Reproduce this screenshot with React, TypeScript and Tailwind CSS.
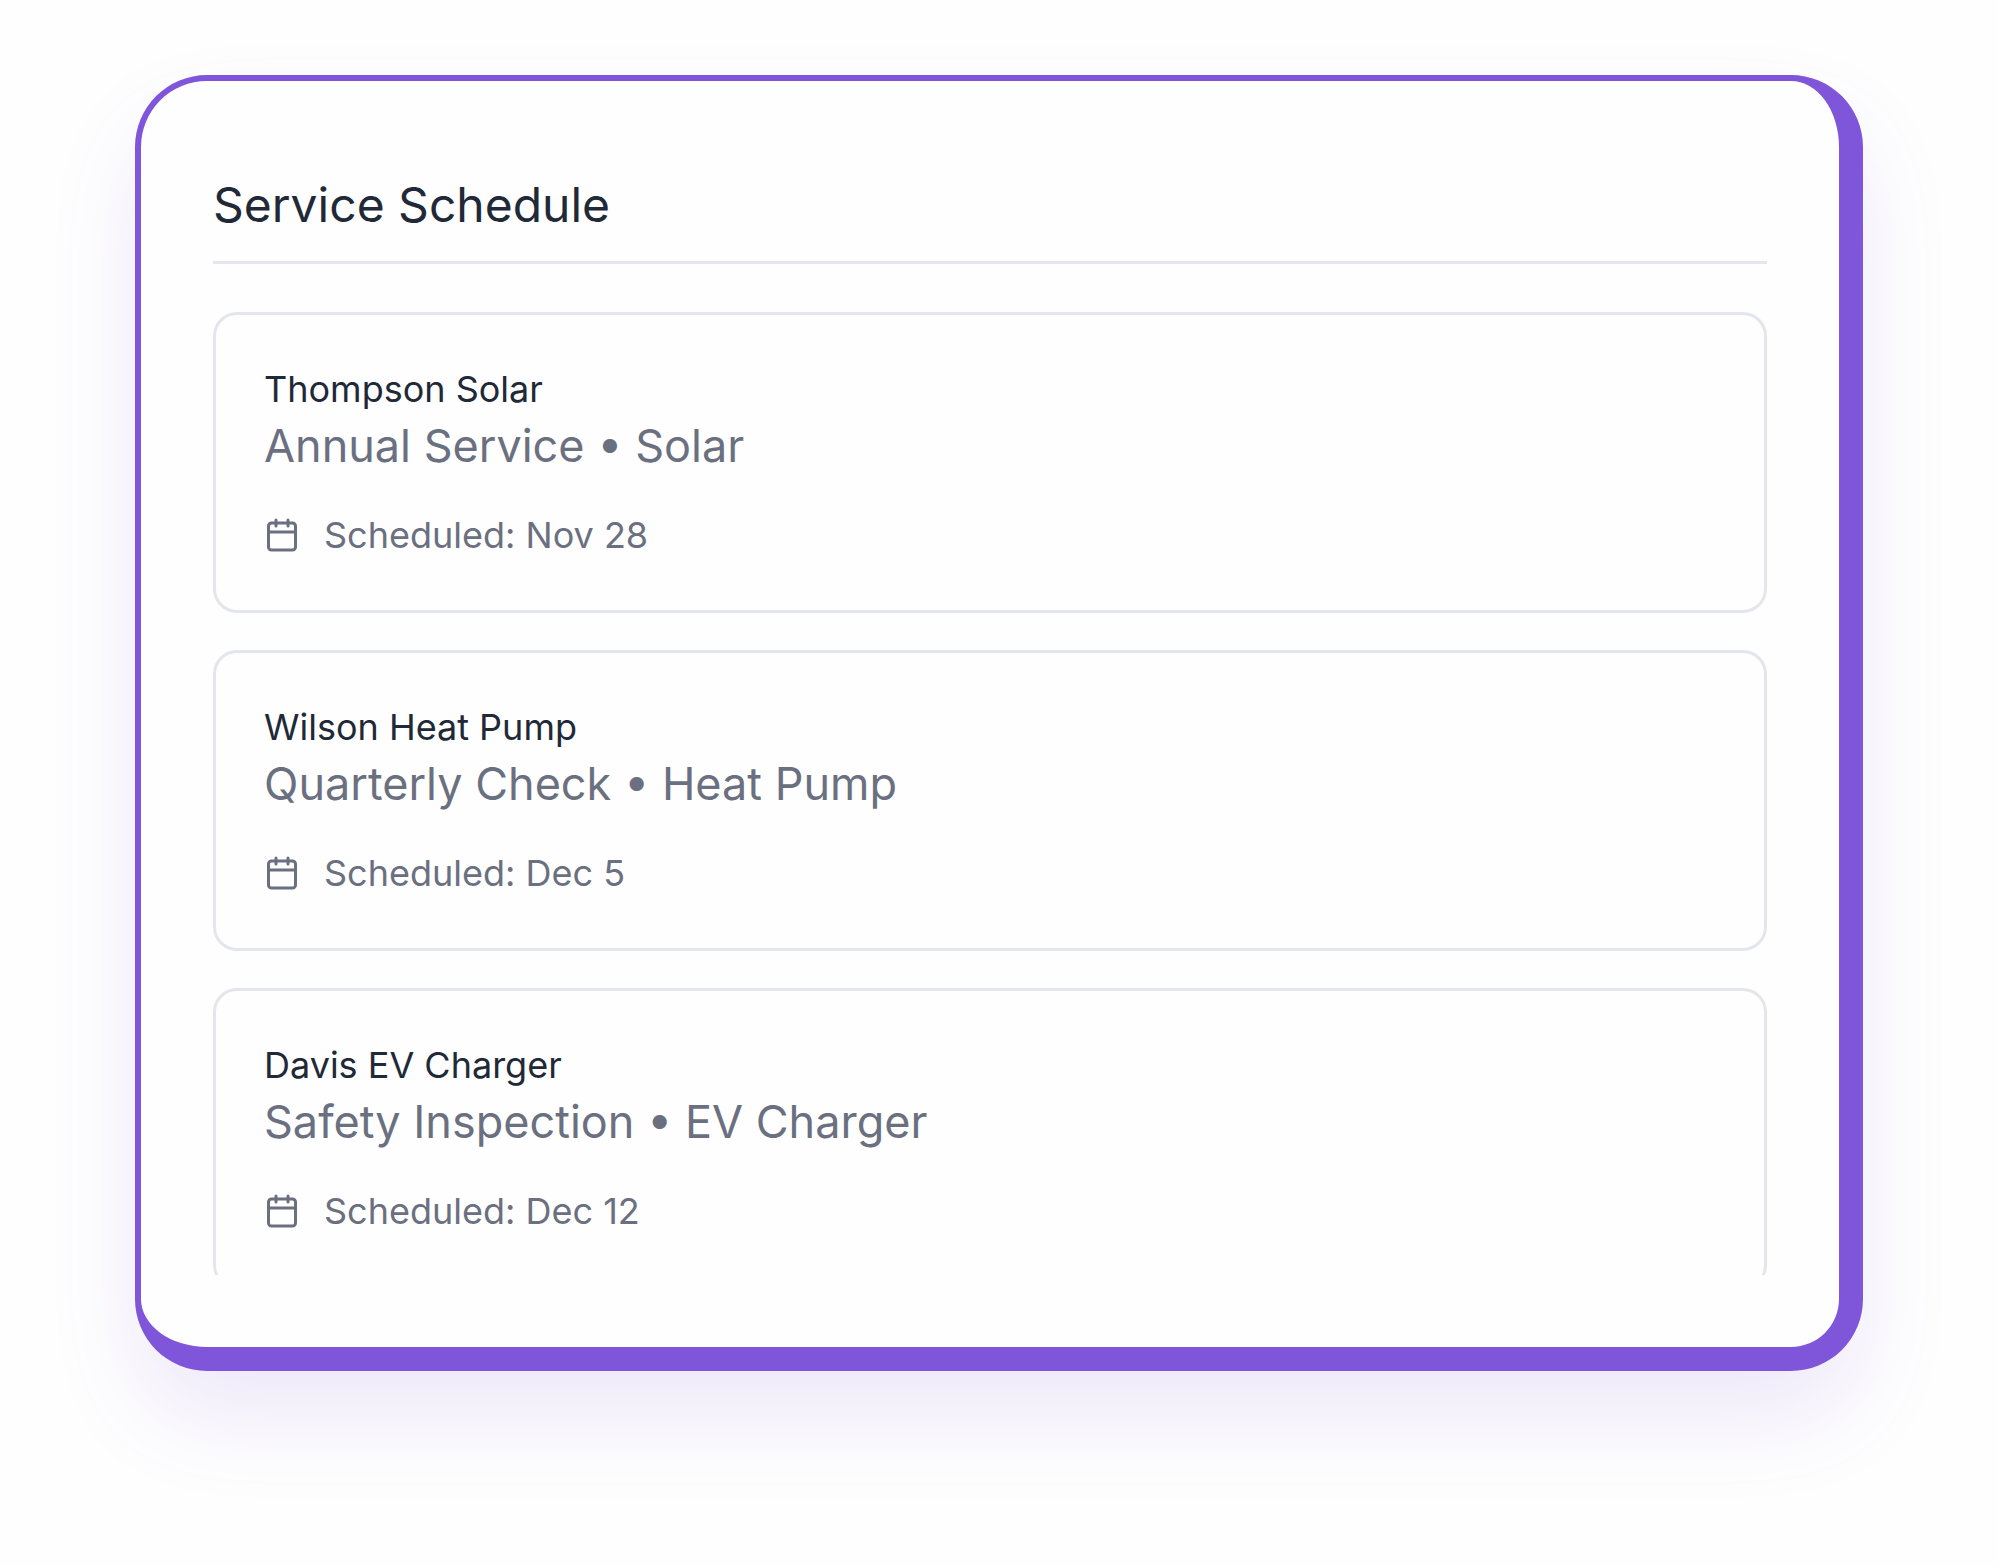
import { Calendar } from "lucide-react";

type Service = { customer: string; type: string; system: string; date: string };

const services: Service[] = [
  { customer: "Thompson Solar", type: "Annual Service", system: "Solar", date: "Nov 28" },
  { customer: "Wilson Heat Pump", type: "Quarterly Check", system: "Heat Pump", date: "Dec 5" },
  { customer: "Davis EV Charger", type: "Safety Inspection", system: "EV Charger", date: "Dec 12" },
];

/* ─── Service card ─────────────────────────────── */
function ServiceCard({ customer, type, system, date }: Service) {
  return (
    <li className="shrink-0 rounded-3xl border-[3px] border-[#e5e6ed] p-12">
      <h3 className="text-4xl leading-[52px] text-[#1f2937]">{customer}</h3>
      <p className="text-[45px] leading-[61px] text-[#6b7080]">
        {type} • {system}
      </p>
      <div className="mt-8 flex items-center gap-6 text-[#6b7080]">
        <Calendar className="size-9" strokeWidth={2} aria-hidden="true" />
        <span className="text-4xl leading-[54px]">Scheduled: {date}</span>
      </div>
    </li>
  );
}

/* ─── Page ─────────────────────────────────────── */
export default function App() {
  return (
    <main className="min-h-screen bg-[#fefefe] px-[135px] py-[75px] font-['Inter',sans-serif]">
      <section className="rounded-[72px] border-6 border-r-24 border-b-24 border-[#7f56d9] bg-[#fefefe] p-[72px] shadow-[0_48px_96px_-8px_rgba(127,86,217,0.14)]">
        {/* the list runs past the bottom edge and is cut off */}
        <div className="max-h-[1122px] overflow-hidden">
          <h2 className="border-b-[3px] border-[#e5e6ed] pt-4 pb-5 text-5xl leading-[72px] text-[#1f2937]">
            Service Schedule
          </h2>
          <ul className="mt-12 flex flex-col gap-[37px]">
            {services.map((s) => (
              <ServiceCard key={s.customer} {...s} />
            ))}
          </ul>
        </div>
      </section>
    </main>
  );
}
